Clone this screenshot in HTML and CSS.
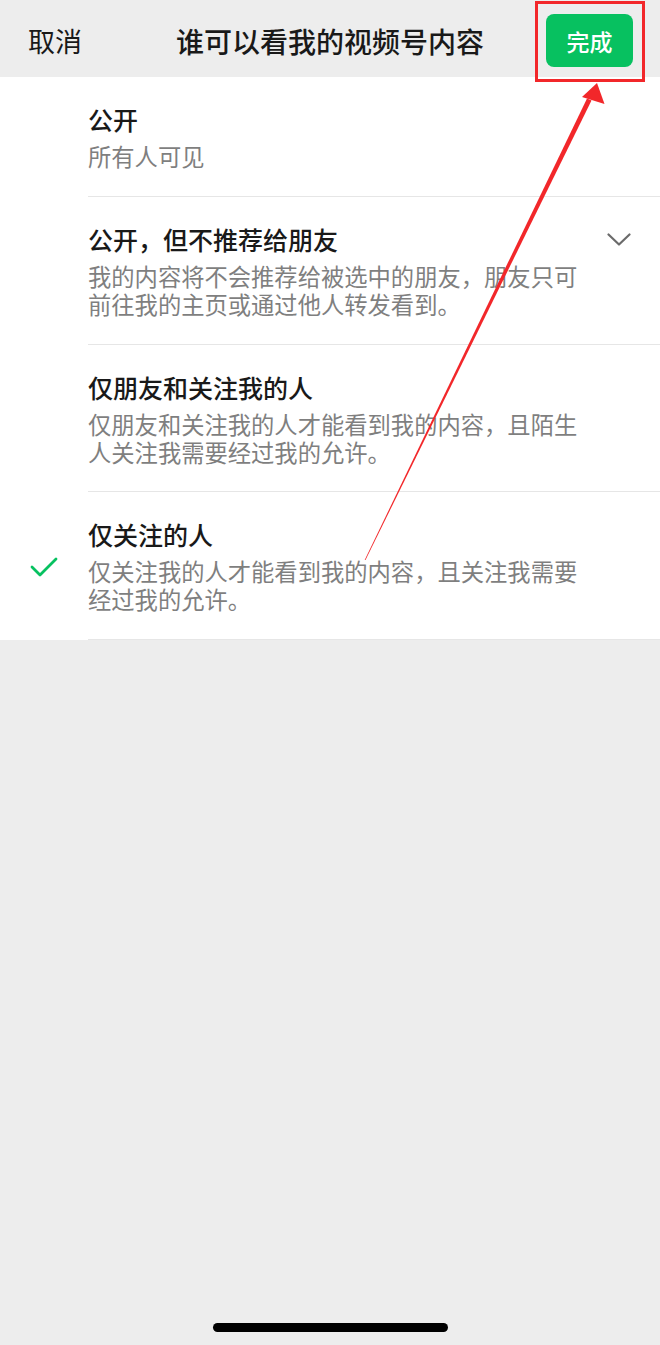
FILE: index.html
```html
<!DOCTYPE html>
<html lang="zh-CN">
<head>
<meta charset="utf-8">
<title>谁可以看我的视频号内容</title>
<link rel="stylesheet" href="styles.css">
</head>
<body>
<div class="page">
  <header class="navbar">
    <div class="nav-left">取消</div>
    <div class="nav-title">谁可以看我的视频号内容</div>
    <div class="nav-right"><button class="btn-done">完成</button></div>
  </header>

  <ul class="options">
    <li class="item item-first">
      <div class="item-mark"></div>
      <div class="item-body">
        <div class="item-text">
          <div class="item-title">公开</div>
          <div class="item-desc">所有人可见</div>
        </div>
      </div>
    </li>
    <li class="item">
      <div class="item-mark"></div>
      <div class="item-body">
        <div class="item-text">
          <div class="item-title">公开，但不推荐给朋友</div>
          <div class="item-desc">我的内容将不会推荐给被选中的朋友，朋友只可前往我的主页或通过他人转发看到。</div>
        </div>
        <svg class="chevron" width="24" height="14" viewBox="0 0 24 14"><polyline points="1.5,1.5 12,11.5 22.5,1.5" fill="none" stroke="#6b6b6b" stroke-width="2.2" stroke-linecap="round" stroke-linejoin="round"/></svg>
      </div>
    </li>
    <li class="item item-compact">
      <div class="item-mark"></div>
      <div class="item-body">
        <div class="item-text">
          <div class="item-title">仅朋友和关注我的人</div>
          <div class="item-desc">仅朋友和关注我的人才能看到我的内容，且陌生人关注我需要经过我的允许。</div>
        </div>
      </div>
    </li>
    <li class="item">
      <div class="item-mark">
        <svg class="check" width="28" height="22" viewBox="0 0 28 22"><polyline points="2,11 10,19 26,3" fill="none" stroke="#07c160" stroke-width="2.8" stroke-linecap="round" stroke-linejoin="round"/></svg>
      </div>
      <div class="item-body">
        <div class="item-text">
          <div class="item-title">仅关注的人</div>
          <div class="item-desc">仅关注我的人才能看到我的内容，且关注我需要经过我的允许。</div>
        </div>
      </div>
    </li>
  </ul>

  <div class="filler"></div>
  <footer class="home-area"><div class="home-indicator"></div></footer>

  <svg class="annotation" width="660" height="1345" viewBox="0 0 660 1345">
    <rect x="536.5" y="2.5" width="107" height="78" fill="none" stroke="#f2272a" stroke-width="3"/>
    <polygon points="597,83 604.5,104 582,97" fill="#f2272a"/>
    <polygon points="591.5,100.5 587,98.5 364.7,560 365.5,560" fill="#f2272a"/>
  </svg>
</div>
</body>
</html>
```

FILE: styles.css
```css
* { box-sizing: border-box; }

html, body {
  margin: 0;
  padding: 0;
  background: #ededed;
}

body {
  font-family: "Noto Sans CJK SC", "Noto Sans", sans-serif;
  color: #191919;
}

.page {
  position: relative;
  width: 660px;
  min-height: 1345px;
  display: flex;
  flex-direction: column;
}

.navbar {
  height: 77px;
  background: #ededed;
  display: grid;
  grid-template-columns: 1fr auto 1fr;
  align-items: center;
}

.nav-left {
  padding-left: 28px;
  font-size: 27px;
  line-height: 36px;
  color: #191919;
  margin-top: 4px;
}

.nav-title {
  font-size: 28px;
  line-height: 36px;
  font-weight: 500;
  color: #191919;
  margin-top: 4px;
}

.nav-right {
  justify-self: end;
  padding-right: 27px;
  display: flex;
}

.btn-done {
  width: 87px;
  height: 53px;
  margin-top: 4px;
  border: none;
  border-radius: 8px;
  background: #07c160;
  color: #ffffff;
  font-family: inherit;
  font-size: 23px;
  font-weight: 500;
  line-height: 30px;
  padding: 0;
}

.options {
  list-style: none;
  margin: 0;
  padding: 0;
  background: #ffffff;
}

.item {
  display: flex;
}

.item-mark {
  width: 88px;
  flex: none;
  display: flex;
  align-items: center;
  justify-content: center;
}

.check {
  display: block;
  margin-top: 2px;
}

.item-body {
  flex: 1;
  display: flex;
  align-items: flex-start;
  justify-content: space-between;
  padding: 27px 0 26px;
  border-bottom: 1px solid #e6e6e6;
}

.item-first .item-body {
  padding-bottom: 26px;
}

.item-compact .item-body {
  padding-bottom: 25px;
}

.item-text {
  width: 500px;
}

.item-title {
  font-size: 25px;
  line-height: 30px;
  font-weight: 500;
  color: #191919;
}

.item-desc {
  margin-top: 8px;
  font-size: 23.3px;
  line-height: 28px;
  color: #7f7f7f;
}

.chevron {
  display: block;
  margin-top: 9px;
  margin-right: 29px;
}

.filler {
  flex: 1;
}

.home-area {
  display: flex;
  justify-content: center;
  padding-bottom: 13px;
}

.home-indicator {
  width: 235px;
  height: 9px;
  border-radius: 5px;
  background: #000000;
}

.annotation {
  position: absolute;
  left: 0;
  top: 0;
  pointer-events: none;
}
```
